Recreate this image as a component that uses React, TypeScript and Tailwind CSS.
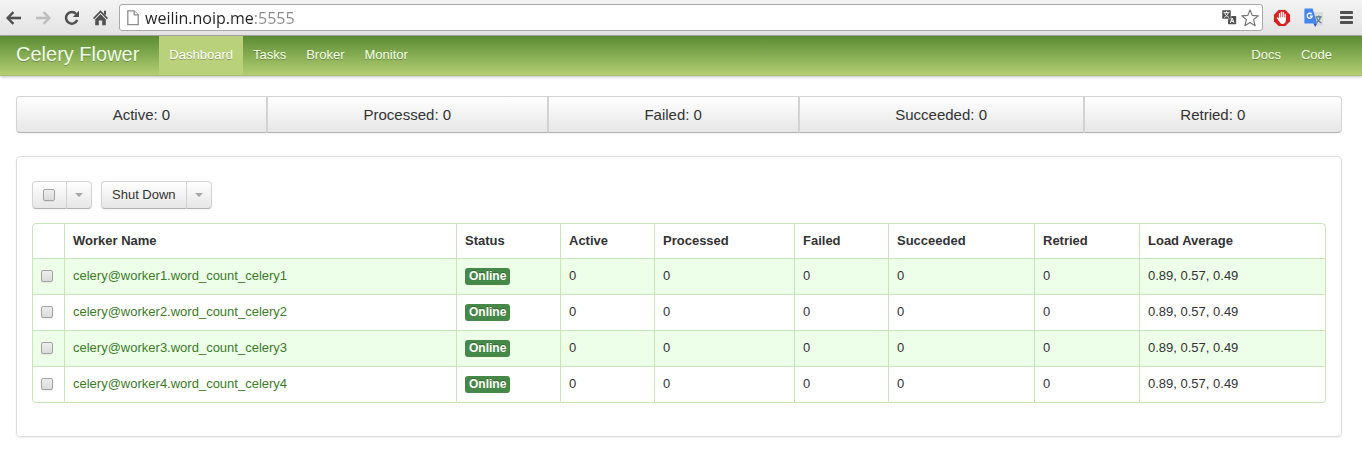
import React from "react";

const stats = [
  { label: "Active", value: 0 },
  { label: "Processed", value: 0 },
  { label: "Failed", value: 0 },
  { label: "Succeeded", value: 0 },
  { label: "Retried", value: 0 },
];

const columns = ["Worker Name", "Status", "Active", "Processed", "Failed", "Succeeded", "Retried", "Load Average"];

const workers = [1, 2, 3, 4].map((n) => ({
  name: `celery@worker${n}.word_count_celery${n}`,
  status: "Online",
  counts: [0, 0, 0, 0, 0],
  load: "0.89, 0.57, 0.49",
}));

const checkboxClass =
  "block size-3 shrink-0 appearance-none rounded-[2px] border border-[#a3a3a3] bg-linear-to-b from-[#ededed] to-[#dcdcdc] shadow-[0_1px_1px_rgba(0,0,0,0.08)] checked:bg-none checked:bg-[#468847]";

const buttonClass =
  "flex items-center border border-[#d4d4d4] border-b-[#b3b3b3] bg-linear-to-b from-white to-[#e6e6e6] text-[13px] leading-[18px] shadow-[0_1px_2px_rgba(0,0,0,0.05)]";

const cellClass = "border-t border-l border-[#c9e6bb] px-2 pb-[2px]";

function BackIcon({ color }: { color: string }) {
  return (
    <svg width="16" height="14" viewBox="0 0 16 14" fill="none" stroke={color} aria-hidden="true">
      <path d="M1.6 7H15" strokeWidth="2.6" />
      <path d="M7.4 1.2L1.6 7L7.4 12.8" strokeWidth="2.4" />
    </svg>
  );
}

function ReloadIcon() {
  return (
    <svg width="16" height="16" viewBox="0 0 16 16" aria-hidden="true">
      <path d="M12.2 4A5.8 5.8 0 1 0 13.2 10" fill="none" stroke="#505050" strokeWidth="2.5" />
      <path d="M15 0.8V7H8.8Z" fill="#505050" />
    </svg>
  );
}

function HomeIcon() {
  return (
    <svg width="16" height="16" viewBox="0 0 16 16" fill="#505050" aria-hidden="true">
      <path d="M0.6 8.6L7.5 1.4L14.4 8.6" fill="none" stroke="#505050" strokeWidth="1.6" />
      <path d="M7.5 4L12.8 9.4V15.2H9.2V10.6H5.8V15.2H2.2V9.4Z" />
      <path d="M11 0.8H13V5.4L11 3.4Z" />
    </svg>
  );
}

function PageIcon() {
  return (
    <svg width="12" height="16" viewBox="0 0 12 16" fill="#fff" stroke="#8d8d8d" strokeWidth="1.3" aria-hidden="true">
      <path d="M0.8 0.8H7.2L11.2 4.8V14.6H0.8Z" />
      <path d="M7.2 0.8V4.8H11.2" />
    </svg>
  );
}

function TranslateIcon() {
  return (
    <svg width="15" height="15" viewBox="0 0 15 15" aria-hidden="true">
      <rect x="6" y="6" width="8.2" height="8.2" rx="0.8" fill="#505050" />
      <path d="M8.4 12.8L10.2 8L12 12.8M9 11.4H11.4" fill="none" stroke="#fff" strokeWidth="1" />
      <rect x="0" y="0" width="9" height="9" rx="0.8" fill="#505050" stroke="#fff" strokeWidth="0.5" />
      <path d="M1.6 2.6H7.4M4.5 1.2V2.6M2.2 7.4C4.4 6.4 5.8 4.8 6.2 2.8M2.8 2.8C3.2 4.8 4.8 6.6 7 7.4" fill="none" stroke="#fff" strokeWidth="0.9" />
    </svg>
  );
}

function StarIcon() {
  return (
    <svg width="18" height="18" viewBox="0 0 18 18" fill="#fff" stroke="#757575" strokeWidth="1.2" strokeLinejoin="round" aria-hidden="true">
      <path d="M9 0.9L11.2 6.4L17.2 6.8L12.6 10.6L14.1 16.7L9 13.4L3.9 16.7L5.4 10.6L0.8 6.8L6.8 6.4Z" />
    </svg>
  );
}

function BlockIcon() {
  return (
    <svg width="18" height="18" viewBox="0 0 18 18" aria-hidden="true">
      <path d="M5.4 0.3H12.6L17.7 5.4V12.6L12.6 17.7H5.4L0.3 12.6V5.4Z" fill="#d9d9d9" />
      <path d="M5.7 1H12.3L17 5.7V12.3L12.3 17H5.7L1 12.3V5.7Z" fill="#d8201d" />
      <path d="M6.5 10.4V4.6M8.4 9V3.1M10.3 9V3.5M12.2 10V5.2M4.4 9L6.6 11.6" fill="none" stroke="#fff" strokeWidth="1.3" strokeLinecap="round" />
      <path d="M5.9 8.4H12.8V11.2Q12.8 15 9.4 15Q7.4 15 6.4 12.8L5 10.4Z" fill="#fff" />
    </svg>
  );
}

function GoogleTranslateIcon() {
  return (
    <svg width="20" height="20" viewBox="0 0 20 20" aria-hidden="true">
      <path d="M8 4H18.4Q19 4 19 4.6V17.4Q19 18 18.4 18H12Z" fill="#dcdcdc" />
      <path d="M11.6 8.8H17.8M14.8 7.4V8.8M12.6 14.6C15 13 16.2 11 16.4 8.9M12.6 9.4C13 11.6 15 13.8 17.4 15" fill="none" stroke="#607d8b" strokeWidth="1.2" />
      <path d="M9.4 15.2H13.2L11.2 19Z" fill="#2a4fb5" />
      <path d="M1 0.4H8.6L13.2 15.6H1Q0.4 15.6 0.4 15V1Q0.4 0.4 1 0.4Z" fill="#4684ee" />
      <path d="M7.7 6.2A2.5 2.5 0 1 0 8.2 8.2H6" fill="none" stroke="#fff" strokeWidth="1.3" />
    </svg>
  );
}

function MenuIcon() {
  return (
    <svg width="13" height="13" viewBox="0 0 13 13" fill="#505050" aria-hidden="true">
      <rect width="13" height="3" rx="0.8" />
      <rect y="5" width="13" height="3" rx="0.8" />
      <rect y="10" width="13" height="3" rx="0.8" />
    </svg>
  );
}

function Caret() {
  return (
    <svg width="8" height="4" viewBox="0 0 8 4" fill="#a6a6a6" aria-hidden="true">
      <path d="M0 0H8L4 4Z" />
    </svg>
  );
}

function BrowserBar() {
  return (
    <div className="flex h-9 items-center border-b border-[#a9a9a9] bg-linear-to-b from-[#f4f4f4] to-[#e3e3e3] pr-[9px]">
      <div className="flex items-center gap-[13px] pl-[6px]">
        <button type="button" aria-label="Back"><BackIcon color="#505050" /></button>
        <button type="button" aria-label="Forward" className="-scale-x-100"><BackIcon color="#bdbdbd" /></button>
        <button type="button" aria-label="Reload"><ReloadIcon /></button>
        <button type="button" aria-label="Home"><HomeIcon /></button>
      </div>
      <div className="ml-[10px] flex h-[27px] flex-1 items-center rounded-[3px] border border-[#a8a8a8] bg-white pr-[3px] pl-[7px]">
        <PageIcon />
        <input
          type="text"
          aria-label="Address"
          defaultValue="weilin.noip.me:5555"
          className="ml-[6px] min-w-0 flex-1 bg-[linear-gradient(90deg,#222_109px,#8a8a8a_109px)] bg-clip-text font-['Open_Sans','Noto_Sans',sans-serif] text-[16px] leading-[22px] text-transparent caret-black outline-none"
        />
        <div className="flex items-center gap-1">
          <button type="button" aria-label="Translate this page"><TranslateIcon /></button>
          <button type="button" aria-label="Bookmark this page"><StarIcon /></button>
        </div>
      </div>
      <button type="button" aria-label="Ad blocker" className="ml-[10px]"><BlockIcon /></button>
      <button type="button" aria-label="Google Translate" className="ml-[13px]"><GoogleTranslateIcon /></button>
      <button type="button" aria-label="Menu" className="ml-4"><MenuIcon /></button>
    </div>
  );
}

function NavLink({ children, active = false }: { children: React.ReactNode; active?: boolean }) {
  return (
    <a
      href="#"
      aria-current={active ? "page" : undefined}
      className={
        active
          ? "flex items-center bg-[#b8d17a] px-[10px] pb-[2px] text-white"
          : "flex items-center px-[10px] pb-[2px] text-[#f4ffe8]"
      }
    >
      {children}
    </a>
  );
}

function NavBar() {
  return (
    <nav className="flex h-10 items-stretch border-b border-[#a5bd70] bg-linear-to-b from-[#5a8c33] to-[#b3ce73] pr-5 pl-4 text-[13px] leading-[18px] shadow-[0_1px_3px_rgba(0,0,0,0.25)] text-shadow-[0_1px_0_rgba(0,0,0,0.25)]">
      <a href="#" className="mr-5 flex items-center pb-1 text-[20px] leading-5 text-[#eeffe6]">Celery Flower</a>
      <NavLink active>Dashboard</NavLink>
      <NavLink>Tasks</NavLink>
      <NavLink>Broker</NavLink>
      <NavLink>Monitor</NavLink>
      <div className="ml-auto flex">
        <NavLink>Docs</NavLink>
        <NavLink>Code</NavLink>
      </div>
    </nav>
  );
}

export default function App() {
  return (
    <div className="min-h-screen bg-white font-['Liberation_Sans',Arial,sans-serif] text-[13px] leading-[18px] text-[#333]">
      <BrowserBar />
      <NavBar />
      <main className="px-5 pt-5 pb-3 pl-4">
        <div className="flex text-[15px] leading-[18px]">
          {stats.map((s) => (
            <button
              key={s.label}
              type="button"
              className="h-[37px] flex-auto border border-[#d4d4d4] border-b-[#b3b3b3] bg-linear-to-b from-white to-[#e6e6e6] shadow-[0_1px_2px_rgba(0,0,0,0.05)] first:rounded-l-[4px] last:rounded-r-[4px]"
            >
              {s.label}: {s.value}
            </button>
          ))}
        </div>

        <section className="mt-[23px] rounded-[4px] border border-[#ddd] px-[15px] pt-6 pb-[33px] shadow-[0_1px_2px_rgba(0,0,0,0.08)]">
          <div className="flex gap-[9px]">
            <div className="flex h-7">
              <label className={`${buttonClass} rounded-l-[4px] pr-[11px] pl-[10px]`}>
                <input type="checkbox" aria-label="Select all workers" className={checkboxClass} />
              </label>
              <button type="button" aria-label="Selection options" className={`${buttonClass} rounded-r-[4px] border-l-0 px-2`}>
                <Caret />
              </button>
            </div>
            <div className="flex h-7">
              <button type="button" className={`${buttonClass} rounded-l-[4px] px-[10px]`}>Shut Down</button>
              <button type="button" aria-label="More actions" className={`${buttonClass} rounded-r-[4px] border-l-0 px-2`}>
                <Caret />
              </button>
            </div>
          </div>

          <table className="mt-[14px] w-full table-fixed border-separate border-spacing-0 overflow-hidden rounded-[4px] border border-t-0 border-l-0 border-[#c9e6bb] text-left">
            <colgroup>
              <col className="w-8" />
              <col className="w-[392px]" />
              <col className="w-[104px]" />
              <col className="w-[94px]" />
              <col className="w-[140px]" />
              <col className="w-[94px]" />
              <col className="w-[146px]" />
              <col className="w-[105px]" />
              <col className="w-[186px]" />
            </colgroup>
            <thead>
              <tr className="h-[35px]">
                <th scope="col" aria-label="Select" className="rounded-tl-[4px] border-t border-l border-[#c9e6bb]" />
                {columns.map((c) => (
                  <th key={c} scope="col" className="border-t border-l border-[#c9e6bb] px-2 font-bold last:rounded-tr-[4px]">
                    {c}
                  </th>
                ))}
              </tr>
            </thead>
            <tbody>
              {workers.map((w) => (
                <tr key={w.name} className="group h-9 odd:bg-[#eeffe9]">
                  <td className={`${cellClass} group-last:rounded-bl-[4px]`}>
                    <input type="checkbox" aria-label={`Select ${w.name}`} className={checkboxClass} />
                  </td>
                  <td className={cellClass}>
                    <a href="#" className="text-[#3b7b29]">{w.name}</a>
                  </td>
                  <td className={cellClass}>
                    <span className="inline-block rounded-[3px] bg-[#468847] px-1 text-[12px] leading-[17px] font-bold text-white text-shadow-[0_-1px_0_rgba(0,0,0,0.25)]">
                      {w.status}
                    </span>
                  </td>
                  {w.counts.map((n, i) => (
                    <td key={i} className={cellClass}>{n}</td>
                  ))}
                  <td className={cellClass}>{w.load}</td>
                </tr>
              ))}
            </tbody>
          </table>
        </section>
      </main>
    </div>
  );
}
